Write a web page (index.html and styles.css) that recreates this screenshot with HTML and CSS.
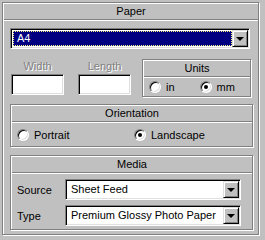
FILE: index.html
```html
<!DOCTYPE html>
<html lang="en">
<head>
  <meta charset="UTF-8" />
  <title>Paper</title>
  <link rel="stylesheet" href="styles.css">
</head>
<body>
  <div class="panel">
    <div class="head">Paper</div>
    <div class="panel-body">
      <div class="combo combo-size">
        <div class="combo-text selected"><span class="focus">A4</span></div>
        <div class="drop-btn"><span class="arrow"></span></div>
      </div>

      <div class="size-row">
        <div class="field">
          <div class="disabled-label">Width</div>
          <div class="edit"></div>
        </div>
        <div class="field">
          <div class="disabled-label">Length</div>
          <div class="edit"></div>
        </div>
        <div class="group units">
          <div class="head">Units</div>
          <div class="radio-row">
            <label class="opt"><span class="radio"></span>in</label>
            <label class="opt"><span class="radio checked"></span>mm</label>
          </div>
        </div>
      </div>

      <div class="group orient">
        <div class="head">Orientation</div>
        <div class="radio-row">
          <label class="opt"><span class="radio"></span>Portrait</label>
          <label class="opt"><span class="radio checked"></span>Landscape</label>
        </div>
      </div>

      <div class="group media">
        <div class="head">Media</div>
        <div class="media-rows">
          <div class="media-row">
            <span class="media-label">Source</span>
            <div class="combo">
              <div class="combo-text">Sheet Feed</div>
              <div class="drop-btn"><span class="arrow"></span></div>
            </div>
          </div>
          <div class="media-row">
            <span class="media-label">Type</span>
            <div class="combo">
              <div class="combo-text">Premium Glossy Photo Paper</div>
              <div class="drop-btn"><span class="arrow"></span></div>
            </div>
          </div>
        </div>
      </div>
    </div>
  </div>
</body>
</html>
```

FILE: styles.css
```css
* {
  box-sizing: border-box;
}
html, body {
  margin: 0;
  padding: 0;
  background: #c0c0c0;
  font-family: 'Liberation Sans', Arial, sans-serif;
  font-size: 11px;
  color: #000;
}
body {
  padding: 2px;
  width: 265px;
  height: 240px;
}
.panel, .group {
  border: 1px solid #808080;
  box-shadow: inset 1px 1px 0 #fff, 1px 1px 0 #fff;
}
.panel {
  width: 257px;
  height: 233px;
}
.head {
  height: 16px;
  line-height: 14px;
  text-align: center;
  border-bottom: 1px solid #808080;
  box-shadow: 0 1px 0 #fff;
  margin: 1px 0 0 1px;
}
.panel-body {
  padding: 8px 5px 0 7px;
}
.combo {
  display: flex;
  height: 21px;
  padding: 2px;
  background: #fff;
  border: 1px solid;
  border-color: #808080 #fff #fff #808080;
  box-shadow: inset 1px 1px 0 #000, inset -1px -1px 0 #dfdfdf;
}
.combo-size {
  width: 240px;
}
.combo-text {
  flex: 1;
  line-height: 15px;
  padding-left: 3px;
  white-space: nowrap;
  overflow: hidden;
}
.combo-text.selected {
  background: #000080;
  color: #fff;
  padding: 0;
}
.focus {
  display: block;
  height: 100%;
  padding-left: 3px;
  border: 1px dotted #ffff80;
  line-height: 13px;
}
.drop-btn {
  width: 16px;
  height: 17px;
  margin: -1px -1px -1px 0;
  background: #c0c0c0;
  border: 1px solid;
  border-color: #dfdfdf #000 #000 #dfdfdf;
  box-shadow: inset 1px 1px 0 #fff, inset -1px -1px 0 #808080;
  display: flex;
  align-items: center;
  justify-content: center;
}
.arrow {
  width: 0;
  height: 0;
  border-left: 4px solid transparent;
  border-right: 4px solid transparent;
  border-top: 4px solid #000;
  margin-top: 1px;
}
.size-row {
  display: flex;
  margin-top: 10px;
}
.field {
  width: 53px;
  margin-left: 1px;
  margin-right: 13px;
  padding-top: 1px;
}
.field + .field {
  margin-right: 11px;
}
.disabled-label {
  text-align: center;
  color: #808080;
  text-shadow: 1px 1px 0 #fff;
  height: 14px;
  line-height: 12px;
}
.edit {
  height: 21px;
  margin-top: 0;
  background: #fff;
  border: 1px solid;
  border-color: #808080 #fff #fff #808080;
  box-shadow: inset 1px 1px 0 #000, inset -1px -1px 0 #dfdfdf;
}
.units {
  width: 109px;
  height: 38px;
}
.radio-row {
  display: flex;
  align-items: center;
}
.units .radio-row {
  height: 20px;
  padding-left: 6px;
}
.units .opt {
  width: 51px;
}
.opt {
  display: flex;
  align-items: center;
}
.radio {
  width: 12px;
  height: 12px;
  border-radius: 50%;
  background: #fff;
  border: 1px solid;
  border-color: #808080 #fff #fff #808080;
  box-shadow: inset 1px 1px 0 #000, inset -1px -1px 0 #dfdfdf;
  margin-right: 5px;
  display: flex;
  align-items: center;
  justify-content: center;
}
.radio.checked::after {
  content: "";
  width: 4px;
  height: 4px;
  border-radius: 50%;
  background: #000;
}
.orient {
  margin-top: 7px;
  height: 43px;
}
.orient .radio-row {
  height: 25px;
  padding-left: 6px;
}
.orient .opt {
  width: 117px;
}
.media {
  margin-top: 8px;
  height: 75px;
}
.media-rows {
  display: flex;
  flex-direction: column;
  gap: 5px;
  padding: 6px 0 0 6px;
}
.media-row {
  display: flex;
  align-items: center;
}
.media-label {
  width: 48px;
}
.media-row .combo {
  width: 176px;
}
```
